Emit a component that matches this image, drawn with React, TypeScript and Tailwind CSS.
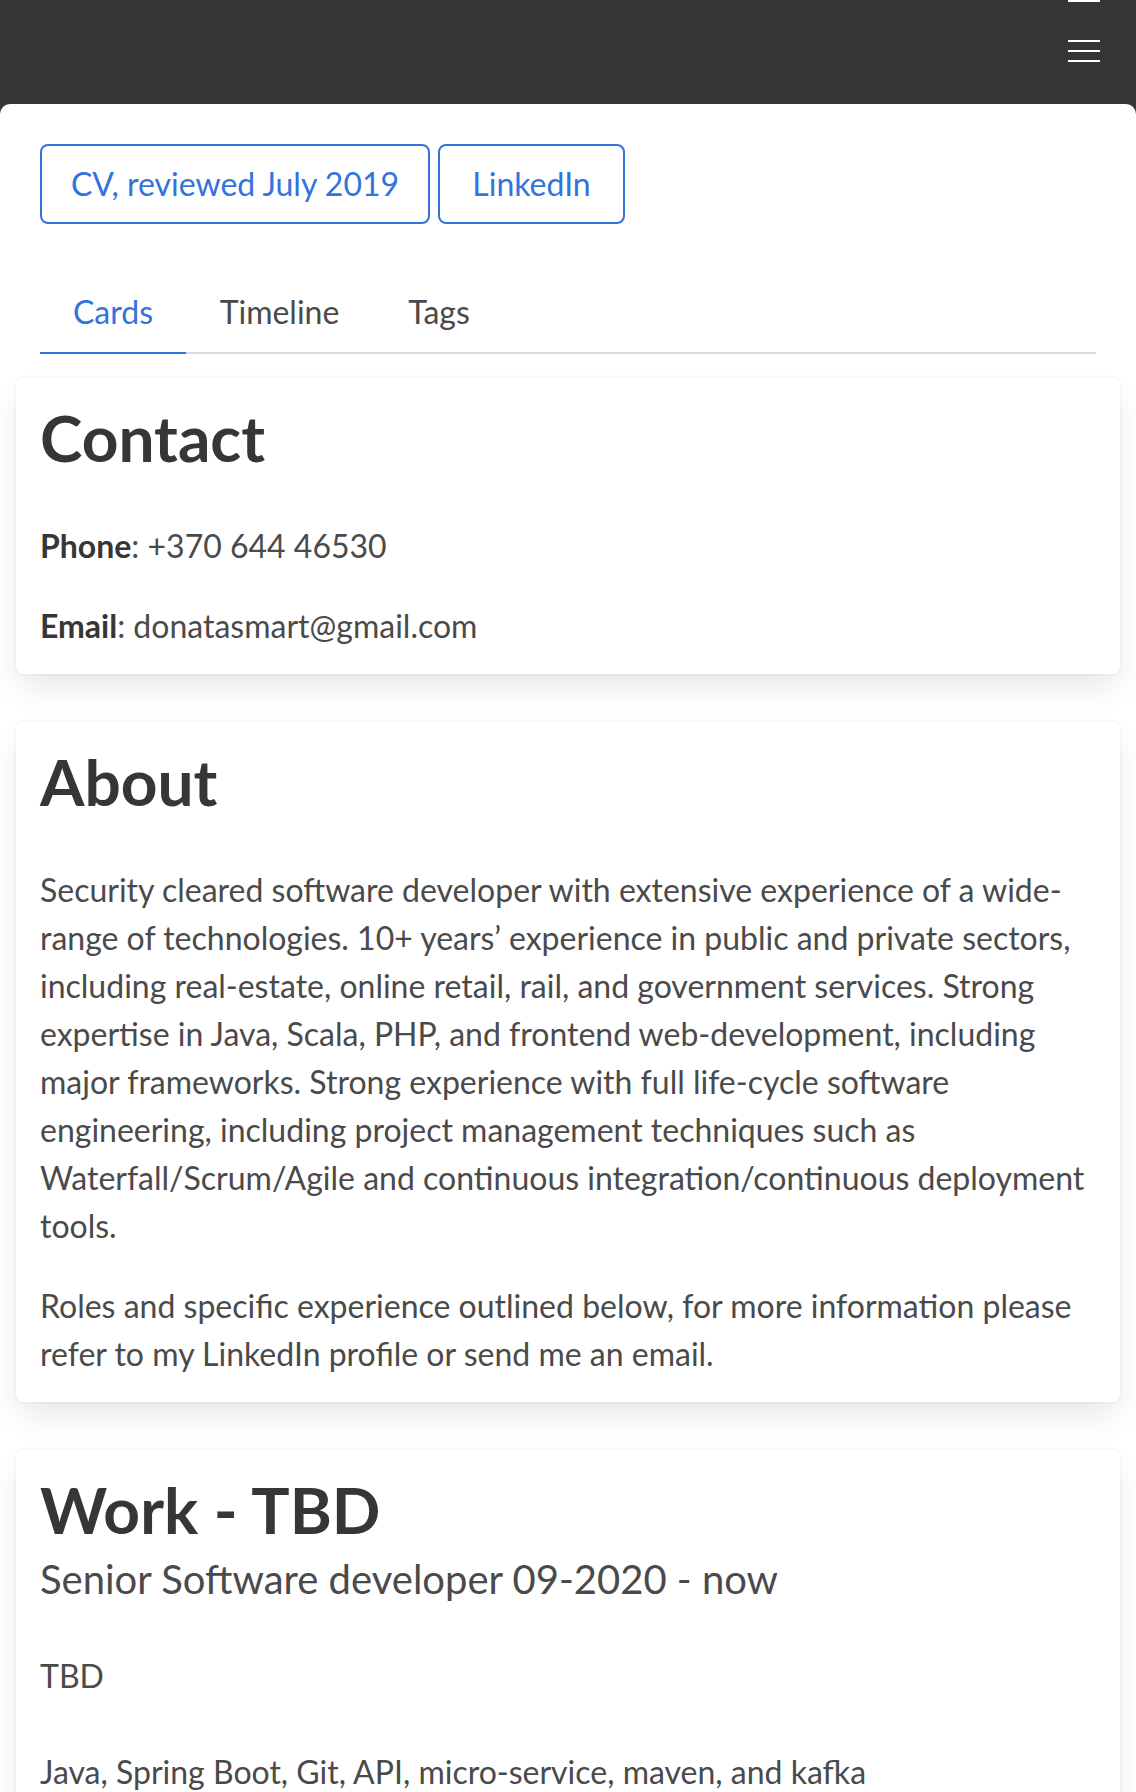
import React from 'react';

const font = "font-['Lato','Liberation_Sans',sans-serif]";

function Card({ children }: { children: React.ReactNode }) {
  return (
    <div className="mx-[16px] rounded-[8px] bg-white px-[24px] py-[24px] shadow-[0_16px_32px_-4px_rgba(10,10,10,0.1),0_0_0_2px_rgba(10,10,10,0.02)]">
      {children}
    </div>
  );
}

function Title({ children, sub }: { children: React.ReactNode; sub?: boolean }) {
  return (
    <h1
      className={
        'text-[64px] leading-[72px] font-bold text-[#363636] ' + (sub ? 'mb-[8px]' : 'mb-[48px]')
      }
    >
      {children}
    </h1>
  );
}

const TABS = [
  { name: 'Cards', width: 'w-[146px]' },
  { name: 'Timeline', width: 'w-[187px]' },
  { name: 'Tags', width: 'w-[132px]' },
];

export default function App() {
  return (
    <div className={`min-h-screen bg-[#363636] ${font}`}>
      {/* Navbar with burger */}
      <header className="flex h-[104px] flex-col items-end pr-[36px]">
        <span className="block h-[2px] w-[32px] bg-white" />
        <div className="mt-[38px] flex flex-col gap-[8px]">
          <span className="block h-[2px] w-[32px] bg-white" />
          <span className="block h-[2px] w-[32px] bg-white" />
          <span className="block h-[2px] w-[32px] bg-white" />
        </div>
      </header>

      <main className="rounded-t-[10px] bg-white pt-[40px] pb-[40px]">
        {/* Buttons */}
        <div className="flex gap-[8px] px-[40px]">
          <a className="flex h-[80px] w-[390px] items-center justify-center rounded-[8px] border-2 border-[#3273dc] text-[32px] text-[#3273dc]">
            CV, reviewed July 2019
          </a>
          <a className="flex h-[80px] w-[187px] items-center justify-center rounded-[8px] border-2 border-[#3273dc] text-[32px] text-[#3273dc]">
            LinkedIn
          </a>
        </div>

        {/* Tabs */}
        <div className="mt-[48px] px-[40px]">
          <ul className="flex border-b-2 border-[#dbdbdb]">
            {TABS.map((t, i) => (
              <li key={t.name} className="-mb-[2px]">
                <a
                  className={
                    'block border-b-2 py-[16px] text-center text-[32px] leading-[48px] ' +
                    t.width +
                    ' ' +
                    (i === 0 ? 'border-[#3273dc] text-[#3273dc]' : 'border-transparent text-[#4a4a4a]')
                  }
                >
                  {t.name}
                </a>
              </li>
            ))}
          </ul>
        </div>

        {/* Cards */}
        <div className="mt-[24px] flex flex-col gap-[48px] text-[32px] leading-[48px] text-[#4a4a4a]">
          <Card>
            <Title>Contact</Title>
            <p className="mb-[32px]">
              <strong className="font-bold text-[#363636]">Phone</strong>: +370 644 46530
            </p>
            <p>
              <strong className="font-bold text-[#363636]">Email</strong>: donatasmart@gmail.com
            </p>
          </Card>

          <Card>
            <Title>About</Title>
            <p className="mb-[32px] whitespace-nowrap">
              Security cleared software developer with extensive experience of a wide-
              <br />
              range of technologies. 10+ years’ experience in public and private sectors,
              <br />
              including real-estate, online retail, rail, and government services. Strong
              <br />
              expertise in Java, Scala, PHP, and frontend web-development, including
              <br />
              major frameworks. Strong experience with full life-cycle software
              <br />
              engineering, including project management techniques such as
              <br />
              Waterfall/Scrum/Agile and continuous integration/continuous deployment
              <br />
              tools.
            </p>
            <p className="whitespace-nowrap">
              Roles and specific experience outlined below, for more information please
              <br />
              refer to my LinkedIn profile or send me an email.
            </p>
          </Card>

          <Card>
            <Title sub>Work - TBD</Title>
            <h2 className="mb-[48px] text-[40px] leading-[50px] text-[#4a4a4a]">
              Senior Software developer 09-2020 - now
            </h2>
            <p className="mb-[48px]">TBD</p>
            <p>Java, Spring Boot, Git, API, micro-service, maven, and kafka</p>
          </Card>
        </div>
      </main>
    </div>
  );
}
